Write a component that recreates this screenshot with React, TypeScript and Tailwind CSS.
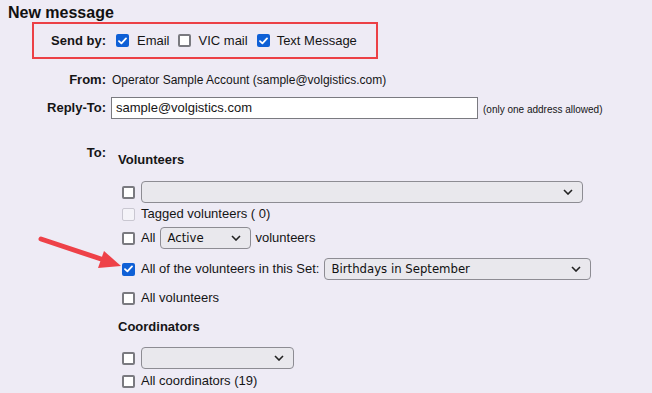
import React from 'react'

function Box({ checked = false, disabled = false }: { checked?: boolean; disabled?: boolean }) {
  if (checked) {
    return (
      <span className="flex h-[13px] w-[13px] shrink-0 items-center justify-center rounded-[2px] bg-[#0f60d6]">
        <svg width="9" height="8" viewBox="0 0 9 8">
          <path d="M1 4.2 L3.4 6.4 L8 1.4" fill="none" stroke="white" strokeWidth="1.8" strokeLinecap="round" strokeLinejoin="round" />
        </svg>
      </span>
    )
  }
  return (
    <span
      className={
        disabled
          ? 'block h-[13px] w-[13px] shrink-0 rounded-[2px] border border-[#c9c7d1] bg-[#f4f3f8]'
          : 'block h-[13px] w-[13px] shrink-0 rounded-[2px] border-2 border-[#7a7a80] bg-white'
      }
    />
  )
}

function Select({ value = '', className }: { value?: string; className: string }) {
  return (
    <div
      className={`flex h-[22px] items-center justify-between rounded-[4px] border border-[#8d8c93] bg-[#e9e8ed] pl-[6px] pr-[9px] font-['DejaVu_Sans_Condensed','Liberation_Sans',sans-serif] text-[13px] text-[#111] ${className}`}
    >
      <span>{value}</span>
      <svg width="10" height="6" viewBox="0 0 10 6">
        <path d="M1 1 L5 5 L9 1" fill="none" stroke="#222" strokeWidth="1.6" />
      </svg>
    </div>
  )
}

export default function App() {
  return (
    <div className="relative h-[393px] w-[652px] overflow-hidden bg-[#eeebf5] font-['Liberation_Sans',Arial,sans-serif] text-[13px] text-[#151515]">
      {/* header */}
      <h1 className="h-[22px] pl-2 pt-[4px] text-[16px] font-bold leading-[18px] text-[#111]">New message</h1>

      {/* send by */}
      <div className="ml-[32px] flex h-[37px] w-[346px] items-center border-2 border-[#ec4046]">
        <span className="w-[72px] text-right font-bold">Send by:</span>
        <span className="ml-[10px]"><Box checked /></span>
        <span className="ml-[8px]">Email</span>
        <span className="ml-[8px]"><Box /></span>
        <span className="ml-[8px]">VIC mail</span>
        <span className="ml-[9px]"><Box checked /></span>
        <span className="ml-[7px]">Text Message</span>
      </div>

      {/* from */}
      <div className="mt-[10px] flex h-[22px] items-center">
        <span className="w-[106px] text-right font-bold">From:</span>
        <span className="ml-[6px] text-[12px]">Operator Sample Account (sample@volgistics.com)</span>
      </div>

      {/* reply-to */}
      <div className="mt-[6px] flex h-[22px] items-center">
        <span className="w-[106px] text-right font-bold">Reply-To:</span>
        <div className="ml-[5px] flex h-[22px] w-[367px] items-center border border-[#7a7a80] bg-white pl-[4px]">
          sample@volgistics.com
        </div>
        <span className="ml-[5px] mt-[3px] text-[10px]">(only one address allowed)</span>
      </div>

      {/* to */}
      <div className="mt-[25px] flex">
        <span className="w-[106px] text-right font-bold leading-[18px]">To:</span>
        <div className="ml-[12px] flex flex-col">
          <div className="pt-[7px] font-bold leading-[18px]">Volunteers</div>

          <div className="mt-[12px] flex h-[22px] items-center">
            <span className="ml-[4px]"><Box /></span>
            <Select className="ml-[6px] w-[442px]" />
          </div>

          <div className="flex h-[22px] items-center">
            <span className="ml-[4px]"><Box disabled /></span>
            <span className="ml-[6px]">Tagged volunteers ( 0)</span>
          </div>

          <div className="mt-[2px] flex h-[22px] items-center">
            <span className="ml-[4px]"><Box /></span>
            <span className="ml-[6px]">All</span>
            <Select value="Active" className="ml-[5px] w-[91px]" />
            <span className="ml-[4px]">volunteers</span>
          </div>

          <div className="mt-[9px] flex h-[22px] items-center">
            <span className="ml-[4px]"><Box checked /></span>
            <span className="ml-[6px]">All of the volunteers in this Set:</span>
            <Select value="Birthdays in September" className="ml-[5px] w-[267px]" />
          </div>

          <div className="mt-[7px] flex h-[22px] items-center">
            <span className="ml-[4px]"><Box /></span>
            <span className="ml-[6px]">All volunteers</span>
          </div>

          <div className="mt-[9px] font-bold leading-[18px]">Coordinators</div>

          <div className="mt-[11px] flex h-[22px] items-center">
            <span className="ml-[4px]"><Box /></span>
            <Select className="ml-[6px] w-[153px]" />
          </div>

          <div className="flex h-[24px] items-center">
            <span className="ml-[4px]"><Box /></span>
            <span className="ml-[6px]">All coordinators (19)</span>
          </div>
        </div>
      </div>

      {/* annotation arrow */}
      <svg className="pointer-events-none absolute left-0 top-0" width="652" height="393">
        <line x1="41" y1="239" x2="104" y2="260" stroke="#ee4148" strokeWidth="5" strokeLinecap="round" />
        <polygon points="121,266 98,268 104,251" fill="#ee4148" />
      </svg>
    </div>
  )
}
